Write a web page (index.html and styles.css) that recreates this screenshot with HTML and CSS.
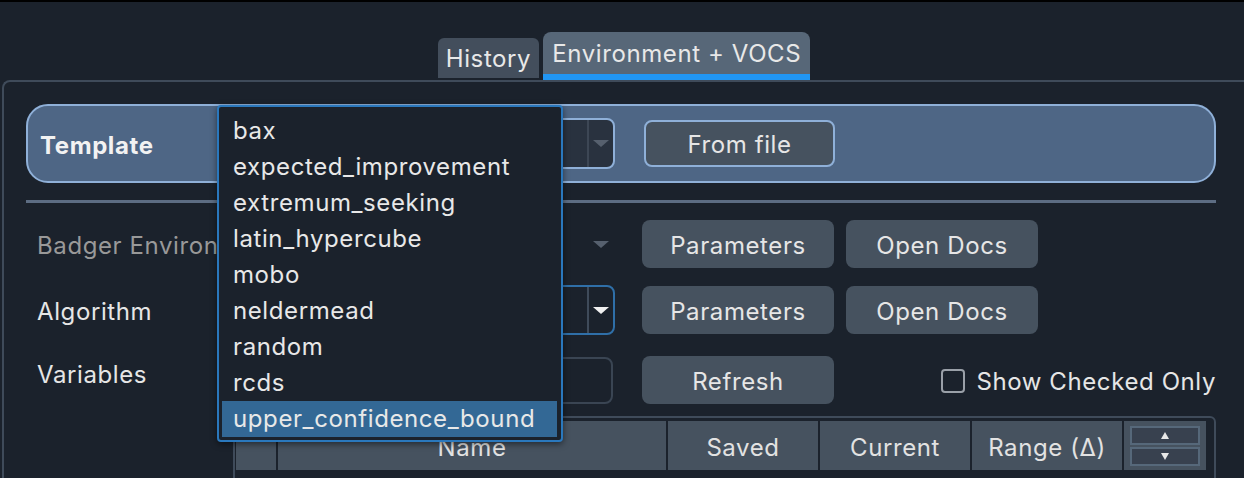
FILE: index.html
```html
<!DOCTYPE html>
<html lang="en">
<head>
<meta charset="UTF-8">
<title>Badger - Environment + VOCS</title>
<link rel="stylesheet" href="styles.css">
</head>
<body>
<div class="tabs">
  <div class="tab">History</div>
  <div class="tab active">Environment + VOCS</div>
</div>

<div class="pane">
  <div class="templateBar">
    <div class="templateLabel">Template</div>
    <div class="combo templateCombo"><div class="comboText"></div><div class="comboArrow"><span class="arrow dim"></span></div></div>
    <button class="btn outlined">From file</button>
  </div>
  <div class="divider"></div>

  <div class="row r1">
    <div class="label muted">Badger Environment</div>
    <div class="combo flat"><div class="comboText"></div><div class="comboArrow noLine"><span class="arrow dim"></span></div></div>
    <button class="btn">Parameters</button>
    <button class="btn">Open Docs</button>
  </div>
  <div class="row r2">
    <div class="label">Algorithm</div>
    <div class="combo focused"><div class="comboText"></div><div class="comboArrow"><span class="arrow"></span></div></div>
    <button class="btn">Parameters</button>
    <button class="btn">Open Docs</button>
  </div>
  <div class="row r3">
    <div class="label top">Variables</div>
    <div class="input"></div>
    <button class="btn">Refresh</button>
    <label class="check"><span class="box"></span>Show Checked Only</label>
  </div>

  <div class="table">
    <div class="thead">
      <div class="th sel"></div>
      <div class="th name">Name</div>
      <div class="th">Saved</div>
      <div class="th">Current</div>
      <div class="th">Range (&Delta;)</div>
      <div class="th spin">
        <div class="spinBtn"><span class="tri up"></span></div>
        <div class="spinBtn"><span class="tri down"></span></div>
      </div>
    </div>
  </div>
</div>

<div class="popup">
  <div class="item">bax</div>
  <div class="item">expected_improvement</div>
  <div class="item">extremum_seeking</div>
  <div class="item">latin_hypercube</div>
  <div class="item">mobo</div>
  <div class="item">neldermead</div>
  <div class="item">random</div>
  <div class="item">rcds</div>
  <div class="item current">upper_confidence_bound</div>
</div>
</body>
</html>
```

FILE: styles.css
```css
body { margin: 0; height: 478px; overflow: hidden; background-color: #1b222c; color: #e6e6e6; font-family: Inter, "Noto Sans", sans-serif; font-size: 24px; letter-spacing: 0.6px; border-top: 2px solid #000; box-sizing: border-box; position: relative; }

.tabs { display: flex; justify-content: center; align-items: flex-end; gap: 4px; height: 78px; padding-left: 4px; }
.tab { background-color: #434e5c; color: #e8e8e8; height: 40px; line-height: 42px; padding: 0 8px; border-radius: 6px 6px 0 0; margin-bottom: 2px; }
.tab.active { background-color: #576778; height: 42px; line-height: 44px; padding: 0 9px; margin-bottom: 0; border-bottom: 6px solid #2196f3; border-radius: 8px 8px 0 0; }

.pane { margin-left: 2px; border-top: 2px solid #3f4b5a; border-left: 2px solid #3f4b5a; border-top-left-radius: 8px; height: 400px; padding: 22px 0 0 22px; box-sizing: border-box; }

.templateBar { width: 1190px; height: 79px; box-sizing: border-box; background-color: #4e6685; border: 2px solid #8fb0d8; border-radius: 22px; display: flex; align-items: center; padding-left: 12px; }
.templateLabel { width: 178px; flex: none; font-weight: bold; color: #f2f2f2; padding-top: 3px; }

.combo { display: flex; flex: none; width: 397px; height: 50px; box-sizing: border-box; border: 2px solid #3f4b5a; border-radius: 8px; background-color: #1b222c; }
.comboText { flex: 1; }
.comboArrow { width: 24px; border-left: 2px solid #3f4b5a; display: flex; align-items: center; justify-content: center; }
.comboArrow.noLine { border-left-color: transparent; }
.arrow { width: 0; height: 0; border-left: 8px solid transparent; border-right: 8px solid transparent; border-top: 7px solid #f0f0f0; }
.arrow.dim { border-top-color: #56606e; }
.templateCombo { height: 51px; background-color: #29323f; border-color: #8fb0d8; }
.templateCombo .comboArrow { border-left-color: #3d4755; }
.combo.flat { border-color: transparent; background-color: transparent; }
.combo.focused { border-color: #2f6fa8; }
.combo.focused .comboArrow { border-left-color: #3f4b5a; }

.btn { font-family: inherit; font-size: 24px; letter-spacing: 0.6px; color: #e6e6e6; background-color: #46525f; border: none; border-radius: 8px; width: 192px; height: 48px; padding: 2px 0 0; margin-left: 12px; flex: none; }
.templateBar .btn.outlined { margin-left: 29px; width: 191px; height: 47px; border: 2px solid #8fb0d8; }
.row .btn:first-of-type { margin-left: 27px; }
.r3 .btn:first-of-type { margin-left: 29px; }

.divider { width: 1190px; height: 3px; background-color: #5d6d83; margin-top: 17px; }

.row { display: flex; align-items: center; padding-left: 11px; width: 1179px; height: 48px; }
.r1 { margin-top: 17px; }
.r2 { margin-top: 18px; }
.r3 { margin-top: 22px; }
.label { width: 181px; flex: none; white-space: nowrap; padding-top: 2px; }
.label.top { padding-top: 0; margin-top: -12px; }
.label.muted { color: #999; }
.input { width: 395px; height: 47px; flex: none; box-sizing: border-box; border: 2px solid #3a4553; border-radius: 8px; }
.check { display: flex; align-items: center; margin-left: auto; white-space: nowrap; padding-top: 2px; }
.box { width: 20px; height: 20px; border: 2px solid #9aa0a8; border-radius: 4px; margin-right: 11px; flex: none; }

.table { margin: 12px 0 0 207px; width: 983px; height: 80px; box-sizing: border-box; border: 2px solid #3f4b5a; border-radius: 6px; padding: 3px 12px 0 1px; }
.thead { display: flex; height: 49px; gap: 2px; }
.th { background-color: #46525f; display: flex; align-items: center; justify-content: center; width: 150px; flex: none; color: #e2e2e2; padding-top: 3px; box-sizing: border-box; }
.th.sel { width: 40px; }
.th.name { width: 388px; }
.th.spin { width: 82px; flex-direction: column; gap: 2px; padding: 2px 4px; }
.spinBtn { width: 70px; height: 19px; box-sizing: border-box; background-color: #38414f; border: 2px solid #56687a; display: flex; align-items: center; justify-content: center; }
.tri { width: 0; height: 0; border-left: 4px solid transparent; border-right: 4px solid transparent; }
.tri.up { border-bottom: 7px solid #e8e8e8; }
.tri.down { border-top: 7px solid #e8e8e8; }

.popup { position: absolute; left: 217px; top: 103px; width: 346px; height: 337px; box-sizing: border-box; background-color: #1b222c; border: 2px solid #2a78bd; border-radius: 4px; padding: 6px 4px 0 3px; box-shadow: 0 2px 6px rgba(0, 0, 0, 0.5); }
.item { height: 36px; line-height: 36px; padding-left: 11px; color: #e8e8e8; }
.item.current { background-color: #336895; }
```
